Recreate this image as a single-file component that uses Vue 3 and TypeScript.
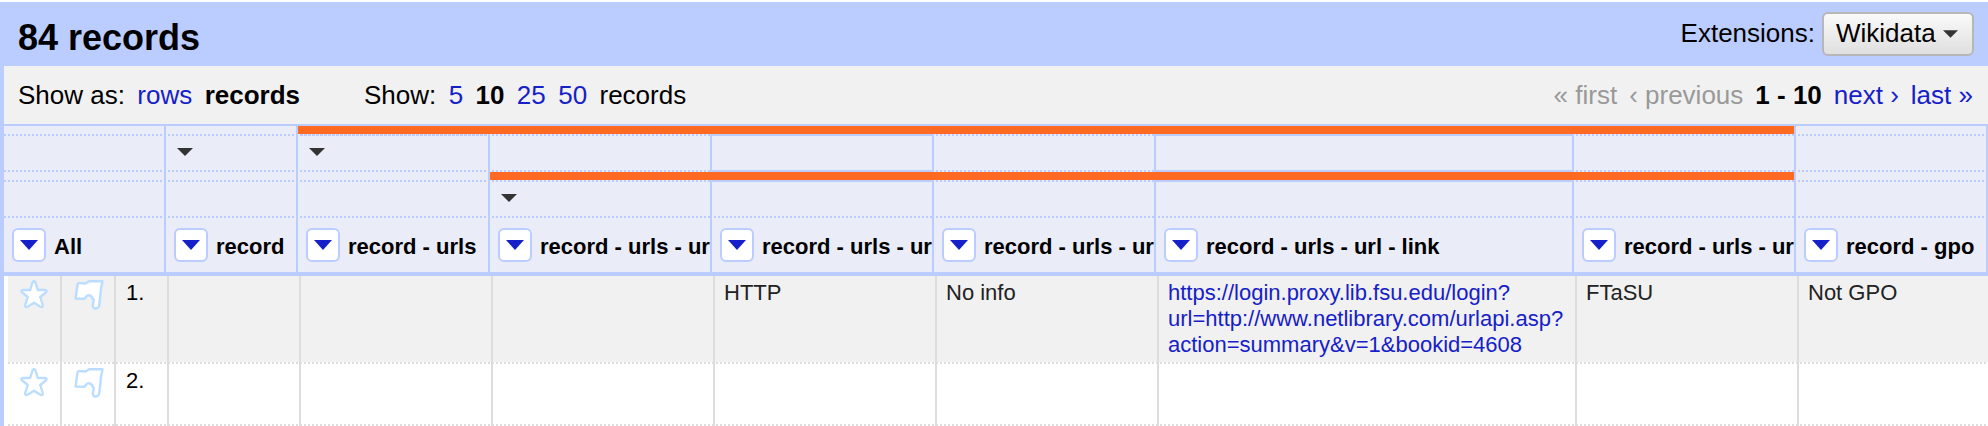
<script setup lang="ts">
interface Column { label: string }
interface GroupCell { arrow?: boolean; cls?: string }
interface Row { index: string; cells: string[] }

const columns: Column[] = [
  { label: 'All' },
  { label: 'record' },
  { label: 'record - urls' },
  { label: 'record - urls - ur' },
  { label: 'record - urls - ur' },
  { label: 'record - urls - ur' },
  { label: 'record - urls - url - link' },
  { label: 'record - urls - ur' },
  { label: 'record - gpo' },
]

const outer: GroupCell[] = [
  {}, { arrow: true }, { arrow: true, cls: 'dense' }, {}, { cls: 'boxed' }, {}, { cls: 'boxed' }, {}, {},
]
const inner: GroupCell[] = [
  {}, {}, {}, { arrow: true }, { cls: 'boxed' }, {}, { cls: 'boxed' }, {}, {},
]

const rows: Row[] = [
  {
    index: '1.',
    cells: ['', '', '', 'HTTP', 'No info', 'https://login.proxy.lib.fsu.edu/login?\nurl=http://www.netlibrary.com/urlapi.asp?\naction=summary&v=1&bookid=4608', 'FTaSU', 'Not GPO'],
  },
  { index: '2.', cells: ['', '', '', '', '', '', '', ''] },
]
</script>

<template>
  <main class="view">
    <header class="summary">
      <h1>84 records</h1>
      <div class="extensions">
        <span>Extensions:</span>
        <button class="ext-button">Wikidata<svg class="ext-arrow" viewBox="0 0 16 8"><path d="M0 0H16L8 8Z" /></svg></button>
      </div>
    </header>

    <nav class="controls">
      <div class="group">
        <span>Show as:</span><a>rows</a><b>records</b>
      </div>
      <div class="group sizes">
        <span>Show:</span><a>5</a><b>10</b><a>25</a><a>50</a><span>records</span>
      </div>
      <div class="group pager">
        <span class="off">« first</span><span class="off">‹ previous</span><b>1 - 10</b><a>next ›</a><a>last »</a>
      </div>
    </nav>

    <section class="head">
      <div class="grid band">
        <i class="plain"></i><i class="plain"></i><i class="bar outer-bar"></i><i class="plain last"></i>
      </div>
      <div class="grid groups">
        <div v-for="(c, i) in outer" :key="i" class="gcell" :class="c.cls">
          <svg v-if="c.arrow" class="arrow" viewBox="0 0 16 8"><path d="M0 0H16L8 8Z" /></svg>
        </div>
      </div>
      <div class="grid band">
        <i class="plain"></i><i class="plain"></i><i class="plain"></i><i class="bar inner-bar"></i><i class="plain last"></i>
      </div>
      <div class="grid groups">
        <div v-for="(c, i) in inner" :key="i" class="gcell open" :class="c.cls">
          <svg v-if="c.arrow" class="arrow" viewBox="0 0 16 8"><path d="M0 0H16L8 8Z" /></svg>
        </div>
      </div>
      <div class="grid titles">
        <div v-for="(c, i) in columns" :key="i" class="title">
          <button class="menu"><svg viewBox="0 0 18 10"><path d="M0 0H18L9 10Z" /></svg></button>
          <span>{{ c.label }}</span>
        </div>
      </div>
    </section>

    <section class="body">
      <div v-for="r in rows" :key="r.index" class="row">
        <div class="cell icon">
          <svg viewBox="0 0 30 30"><path d="M15 1.200Q16.500 1.200 17 4L18.800 10H26Q29 10.500 26.500 12.800L21.200 17L23.800 25Q24 28.200 21 26.500L15 22.800L9 26.500Q6 28.200 6.200 25L8.800 17L3.500 12.800Q1 10.500 4 10H11.200L13 4Q13.500 1.200 15 1.200Z" /></svg>
        </div>
        <div class="cell icon flag">
          <svg viewBox="0 0 30 30"><path d="M1.500 18.500L2.500 12L3.500 4.500Q4 2.800 5.500 3L11.500 3.500L15 1.300H28.500L27 9L26.200 17L25 26.500Q23.500 29 21 28.500Q18.800 28 18.800 25.500L19.800 20L17 16Q13.500 14 11.500 17.500L10.500 18.800Z" /></svg>
        </div>
        <div class="cell index">{{ r.index }}</div>
        <div v-for="(t, i) in r.cells" :key="i" class="cell"><a v-if="t.startsWith('http')">{{ t }}</a><span v-else>{{ t }}</span></div>
      </div>
    </section>
  </main>
</template>

<style>
html, body { margin: 0; background: #fff; overflow: hidden; }
</style>

<style scoped>
* { box-sizing: border-box; }
.view {
  width: 1988px;
  height: 426px;
  overflow: hidden;
  padding-top: 2px;
  font: 26px/30px "Liberation Sans", Arial, sans-serif;
  color: #000;
  white-space: nowrap;
}
a { color: #1620c8; }
.summary {
  display: flex;
  justify-content: space-between;
  height: 64px;
  padding: 0 14px 0 18px;
  background: #bbccff;
}
h1 { margin: 0; font-size: 36px; line-height: 71px; }
.extensions { display: flex; gap: 7px; padding-top: 10px; height: 54px; line-height: 43px; }
.ext-button {
  display: flex;
  align-items: center;
  gap: 7px;
  width: 152px;
  height: 44px;
  padding: 0 0 2px 12px;
  border: 2px solid #b7b7b7;
  border-radius: 6px;
  background: linear-gradient(#fafafa, #dfdfdf);
  font: inherit;
  line-height: 38px;
  color: #000;
}
.ext-arrow { width: 15px; height: 8px; fill: #333; margin-top: 2px; }
.controls, .head, .body { border-left: 4px solid #bbccff; }
.controls {
  display: flex;
  height: 58px;
  padding: 0 15px 0 14px;
  line-height: 58px;
  background: #f1f1f1;
}
.group { display: flex; gap: 12.4px; }
.sizes { margin-left: 64px; }
.pager { margin-left: auto; gap: 12px; }
.off { color: #999; }

.head {
  border-top: 2px solid #bbccff;
  border-bottom: 4px solid #bbccff;
  background: #eaecf8;
}
.grid { display: grid; grid-template-columns: 162px 132px 192px 222px 222px 222px 418px 222px 192px; }
.band { height: 8px; }
.plain { border-right: 2px solid #bbccff; }
.bar { background: #ff6a22; border-right: 2px solid #bbccff; }
.outer-bar { grid-column: 3 / 9; }
.inner-bar { grid-column: 4 / 9; }
.groups { height: 38px; }
.gcell {
  --dots: repeating-linear-gradient(90deg, #bbccff 0 2px, transparent 2px 4px);
  --top-dots: var(--dots);
  border-right: 2px solid #bbccff;
  padding: 14px 0 0 11px;
  background: var(--top-dots) 0 0 / 100% 2px no-repeat, var(--dots) 0 100% / 100% 2px no-repeat;
}
.gcell:not(:first-child) { background-position: 2px 0, 2px 100%; }
.gcell.dense { --top-dots: repeating-linear-gradient(90deg, #bbccff 0 3px, transparent 3px 4px); }
.gcell.boxed {
  background: none;
  padding: 0;
  border-top: 2px solid #bbccff;
  border-bottom: 2px solid #bbccff;
  margin-left: -2px;
  border-left: 2px solid #bbccff;
}
.gcell.open.boxed {
  border-bottom: 0;
  background: var(--dots) 2px 100% / 100% 2px no-repeat;
}
.arrow { display: block; width: 16px; height: 8px; fill: #333; }
.titles { height: 54px; font-size: 22px; font-weight: 700; }
.title {
  display: flex;
  align-items: center;
  gap: 8px;
  min-width: 0;
  padding-left: 8px;
  overflow: hidden;
  border-right: 2px solid #bbccff;
}
.title span { padding-top: 3px; }
.menu {
  display: flex;
  flex: none;
  justify-content: center;
  width: 34px;
  height: 34px;
  padding: 10px 0 0;
  border: 2px solid #bbccff;
  border-radius: 6px;
  background: #fff;
}
.menu svg { width: 18px; height: 10px; fill: #1620c8; }

.body { padding-left: 4px; font-size: 22px; line-height: 26px; }
.row {
  --dots: repeating-linear-gradient(90deg, #ddd 0 2px, transparent 2px 4px);
  display: grid;
  grid-template-columns: 54px 54px 53px 132px 192px 222px 222px 222px 418px 222px 191px;
  height: 62px;
  background: var(--dots) 0 100% / 100% 2px no-repeat, #fff;
}
.row:first-child {
  height: 88px;
  background: var(--dots) 0 100% / 100% 2px no-repeat, linear-gradient(#f1f1f1, #f1f1f1) 0 0 / 100% 86px no-repeat;
}
.cell { border-right: 2px solid #ddd; padding: 4px 0 0 9px; color: #222; white-space: pre; }
.cell:last-child { border-right: 0; }
.index { color: #000; padding-left: 10px; }
.icon { padding: 4px 0 0 11px; }
.flag { padding-left: 12px; }
.icon svg { display: block; width: 30px; height: 30px; fill: #fff; stroke: #bbddff; stroke-width: 2.4; stroke-linejoin: round; }
</style>
